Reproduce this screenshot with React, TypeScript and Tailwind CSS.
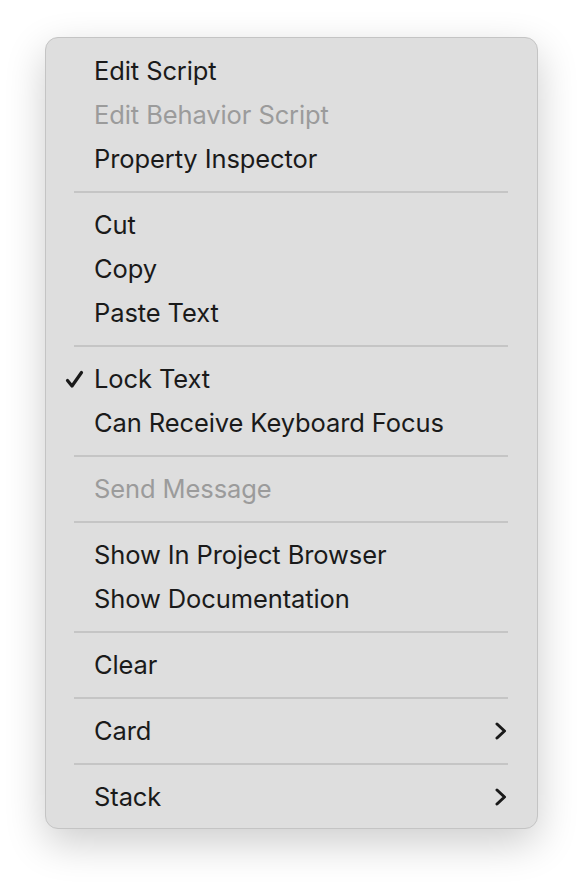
import React from "react";

type Entry =
  | { kind: "item"; label: string; disabled?: boolean; checked?: boolean; submenu?: boolean }
  | { kind: "sep" };

const entries: Entry[] = [
  { kind: "item", label: "Edit Script" },
  { kind: "item", label: "Edit Behavior Script", disabled: true },
  { kind: "item", label: "Property Inspector" },
  { kind: "sep" },
  { kind: "item", label: "Cut" },
  { kind: "item", label: "Copy" },
  { kind: "item", label: "Paste Text" },
  { kind: "sep" },
  { kind: "item", label: "Lock Text", checked: true },
  { kind: "item", label: "Can Receive Keyboard Focus" },
  { kind: "sep" },
  { kind: "item", label: "Send Message", disabled: true },
  { kind: "sep" },
  { kind: "item", label: "Show In Project Browser" },
  { kind: "item", label: "Show Documentation" },
  { kind: "sep" },
  { kind: "item", label: "Clear" },
  { kind: "sep" },
  { kind: "item", label: "Card", submenu: true },
  { kind: "sep" },
  { kind: "item", label: "Stack", submenu: true },
];

function Check() {
  return (
    <svg width="19" height="19" viewBox="0 0 19 19" fill="none">
      <path d="M2.5 10.5 L7 16 L16.5 2.5" stroke="#1a1a1a" strokeWidth="3.2" strokeLinecap="round" strokeLinejoin="round" />
    </svg>
  );
}

function Chevron() {
  return (
    <svg width="12" height="18" viewBox="0 0 12 18" fill="none">
      <path d="M2 2 L9.5 9 L2 16" stroke="#1a1a1a" strokeWidth="3" strokeLinecap="round" strokeLinejoin="round" />
    </svg>
  );
}

function MenuRow({ entry }: { entry: Extract<Entry, { kind: "item" }> }) {
  return (
    <div className="relative flex h-[44px] items-center pl-[48px] pr-[30px]">
      {entry.checked && (
        <span className="absolute left-[19px] top-[13px]">
          <Check />
        </span>
      )}
      <span
        className={
          "flex-1 text-[25.5px] leading-none tracking-[-0.1px] " +
          (entry.disabled ? "text-[#9b9b9b]" : "text-[#1a1a1a]")
        }
      >
        {entry.label}
      </span>
      {entry.submenu && <Chevron />}
    </div>
  );
}

export default function App() {
  return (
    <div className="min-h-[882px] w-[582px] bg-white pl-[45px] pt-[37px]" style={{ fontFamily: "Inter, 'Noto Sans', sans-serif" }}>
      <div className="w-[493px] rounded-[13px] border border-[#c4c4c4] bg-[#dedede] pb-[9px] pt-[11px] shadow-[0_14px_40px_rgba(0,0,0,0.2)]">
        {entries.map((e, i) =>
          e.kind === "sep" ? (
            <div key={i} className="flex h-[22px] items-center pl-[28px] pr-[29px]">
              <div className="h-[2px] w-full bg-[#c5c5c5]" />
            </div>
          ) : (
            <MenuRow key={i} entry={e} />
          )
        )}
      </div>
    </div>
  );
}
